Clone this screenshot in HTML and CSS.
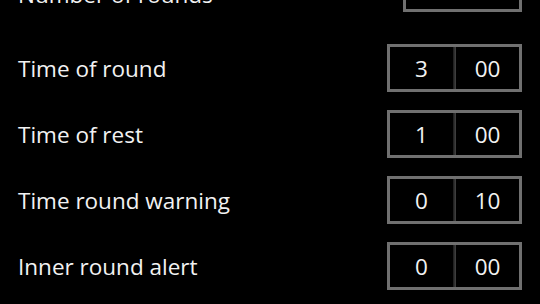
FILE: index.html
```html
<!doctype html>
<html lang="en">
  <head>
    <meta charset="UTF-8" />
    <meta name="viewport" content="width=device-width, initial-scale=1.0" />
    <title>Round timer settings</title>
    <link rel="stylesheet" href="styles.css">
  </head>
  <body>
    <div class="settings">
      <!-- rounds -->
      <div class="row first">
        <div class="label">Number of rounds</div>
        <div class="text-box"></div>
      </div>

      <!-- times -->
      <div class="row">
        <div class="label">Time of round</div>
        <div class="time-box">
          <div class="cell">3</div>
          <div class="split"></div>
          <div class="cell">00</div>
        </div>
      </div>
      <div class="row">
        <div class="label">Time of rest</div>
        <div class="time-box">
          <div class="cell">1</div>
          <div class="split"></div>
          <div class="cell">00</div>
        </div>
      </div>
      <div class="row">
        <div class="label">Time round warning</div>
        <div class="time-box">
          <div class="cell">0</div>
          <div class="split"></div>
          <div class="cell">10</div>
        </div>
      </div>
      <div class="row">
        <div class="label">Inner round alert</div>
        <div class="time-box">
          <div class="cell">0</div>
          <div class="split"></div>
          <div class="cell">00</div>
        </div>
      </div>
    </div>
  </body>
</html>
```

FILE: styles.css
```css
* {
  margin: 0;
  padding: 0;
  box-sizing: border-box;
}

body {
  font-family: 'Open Sans', 'Noto Sans', sans-serif;
  background: #000;
  color: #f2f2f2;
  overflow: hidden;
  height: 304px;
}

.settings {
  margin-top: -40px;
  padding: 0 18px 0 18px;
}

.row {
  display: flex;
  justify-content: space-between;
  align-items: center;
  height: 66px;
}

.row.first {
  align-items: flex-end;
  height: 52px;
  margin-bottom: 23px;
}

.label {
  font-size: 22.5px;
  line-height: 30px;
  padding-top: 2px;
}

.row.first .label {
  margin-bottom: 2px;
}

.text-box {
  width: 119px;
  height: 48px;
  border: 3px solid #707070;
}

.time-box {
  display: flex;
  width: 135px;
  height: 48px;
  border: 3px solid #707070;
}

.cell {
  flex: 1;
  display: flex;
  align-items: center;
  justify-content: center;
  font-size: 22.5px;
  padding-top: 1px;
}

.split {
  width: 3px;
  background: linear-gradient(to right, #1a1a1a, #444);
}
```
